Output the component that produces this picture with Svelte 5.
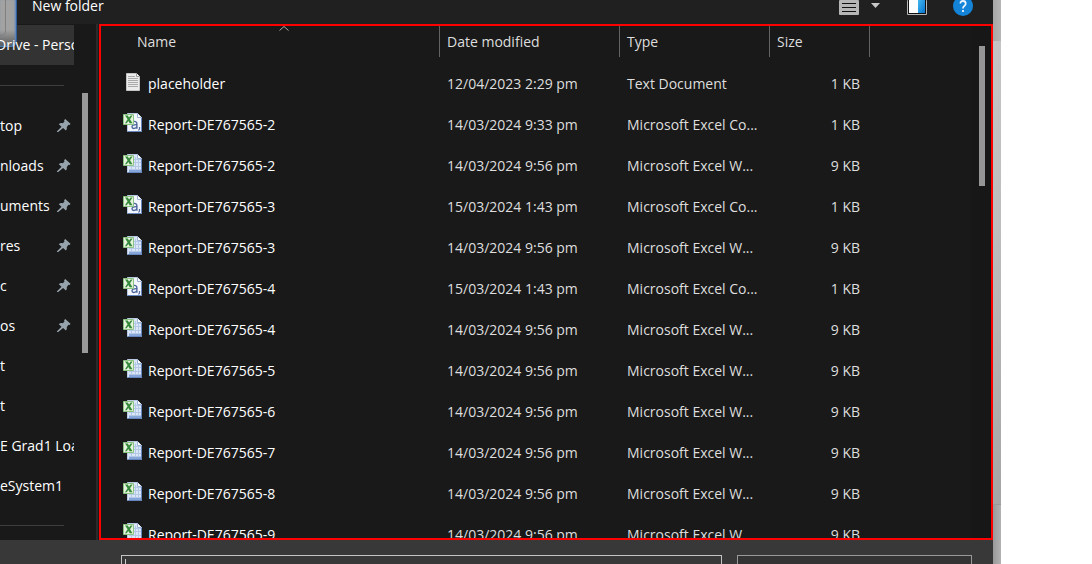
<script>
  const pinned = ['top', 'nloads', 'uments', 'res', 'c', 'os'];
  const folders = ['t', 't', 'E Grad1 Loa', 'eSystem1'];
  const csv = 'Microsoft Excel Co...';
  const xls = 'Microsoft Excel W...';
  const files = [
    { icon: 'txt', name: 'placeholder', date: '12/04/2023 2:29 pm', type: 'Text Document', size: '1 KB' },
    { icon: 'csv', name: 'Report-DE767565-2', date: '14/03/2024 9:33 pm', type: csv, size: '1 KB' },
    { icon: 'xls', name: 'Report-DE767565-2', date: '14/03/2024 9:56 pm', type: xls, size: '9 KB' },
    { icon: 'csv', name: 'Report-DE767565-3', date: '15/03/2024 1:43 pm', type: csv, size: '1 KB' },
    { icon: 'xls', name: 'Report-DE767565-3', date: '14/03/2024 9:56 pm', type: xls, size: '9 KB' },
    { icon: 'csv', name: 'Report-DE767565-4', date: '15/03/2024 1:43 pm', type: csv, size: '1 KB' },
    ...[4, 5, 6, 7, 8, 9].map((n) => ({
      icon: 'xls', name: `Report-DE767565-${n}`, date: '14/03/2024 9:56 pm', type: xls, size: '9 KB'
    }))
  ];
</script>

{#snippet fileIcon(kind)}
  <svg class="file-icon" width="20" height="20" viewBox="0 0 20 20" aria-hidden="true">
    {#if kind === 'txt'}
      <path d="M3.500 1.500h10l3 3v14h-13z" fill="#ececec" stroke="#c4c4c4" />
      <path d="M13.500 1.500v3h3" fill="#fff" stroke="#999" />
      <path d="M5 4.500h7M5 6.500h10M5 8.500h10M5 10.500h10M5 12.500h10M5 14.500h10" stroke="#a9a9a9" />
    {:else}
      <path d="M4.500 .5h10l4 4v14h-14z" fill={kind === 'csv' ? '#f3f7fd' : '#dbe6f6'} stroke="#b9c9e3" />
      <path d="M18.500 5v13.500h-14" fill="none" stroke="#6585be" />
      <path d="M14.500 .5v4h4" fill="#fff" stroke="#9db3d6" />
      {#if kind === 'csv'}
        <path d="M9.500 9.200q1.500-1.200 3-.6 1.400.5 1.400 2.400v4.800M13.900 11.600q-4.900-.2-4.900 2.200 0 1.700 1.700 1.700 2.200 0 3.200-2" fill="none" stroke="#4c659d" stroke-width="1.400" />
        <path d="M16.500 14v2l-1 1.500" fill="none" stroke="#4c659d" stroke-width="1.200" />
      {:else}
        <path d="M11 5.500h7M11 8.500h7M6 12.500h12M6 15.500h12M12.500 3v14M15.500 5v12M8.500 12v5" stroke="#b4c8e8" />
        <path d="M6 16h12v2H6z" fill="#86a5d8" />
      {/if}
      <path d="M.5 1.500h10v10H.5z" fill="#e3f3dc" stroke="#8cc383" />
      <path d="M2 2.500h2.800l1.200 2L7.800 2.500h1.700L7 6.300l2.500 4H6.700L5.300 8 3.700 10.300H2l2.600-4z" fill="#35893a" />
    {/if}
  </svg>
{/snippet}

<div class="screen">
  <div class="dialog">
    <header class="toolbar">
      <button class="new-folder">New folder</button>
      <div class="tools">
        <button class="view" aria-label="Change your view">
          <svg width="20" height="20" viewBox="0 0 20 20"><rect width="20" height="15" y="0" rx="1" fill="#b6b6b6" /><path d="M3 3.500h14M3 7.500h14M3 11.500h14" stroke="#111" /></svg>
        </button>
        <button class="more" aria-label="More options">
          <svg width="10" height="6" viewBox="0 0 10 6"><path d="M0 0h9L4.500 5z" fill="#c8c8c8" /></svg>
        </button>
        <button class="preview" aria-label="Show the preview pane">
          <svg width="20" height="20" viewBox="0 0 20 20">
            <defs><linearGradient id="pane" x2="1" y2="1"><stop stop-color="#43b9ef" /><stop offset="1" stop-color="#0874cf" /></linearGradient></defs>
            <rect width="20" height="15" rx="1" fill="#b6b6b6" /><path d="M1 0h18v14H1z" fill="#111" /><path d="M2 0h9v13H2z" fill="#fff" /><path d="M11 0h7v13h-7z" fill="url(#pane)" />
          </svg>
        </button>
        <button class="help" aria-label="Get help">
          <svg width="20" height="20" viewBox="0 0 20 20"><circle cx="10" cy="10" r="10" fill="#1484d8" /><path d="M7.500 7.500Q7.300 5 10 5t2.700 2.500Q12.700 9 11.300 10T10 12.500M10 14v2" fill="none" stroke="#e8f4ff" stroke-width="1.800" /></svg>
        </button>
      </div>
    </header>

    <div class="body">
      <nav class="sidebar" aria-label="Folders">
        <div class="tree">
          <a class="place current" href="#drive"><span>Drive - Perso</span></a>
          <hr />
          {#each pinned as name}
            <a class="place" href="#folder">
              <span>{name}</span>
              <svg class="pin" width="14" height="14" viewBox="0 0 14 14" aria-hidden="true"><path d="M8.200 0L13.500 4.700 12.700 6l-1.200-.2-1.700 2.100q.5 2.200-.9 3.700L6.100 9 1.200 13H0v-.8l4.500-4.500L1.800 5.200q1.700-1.600 4-.9l1.700-1.800-.4-1.200z" fill="#98a4ad" /></svg>
            </a>
          {/each}
          {#each folders as name}
            <a class="place" href="#folder"><span>{name}</span></a>
          {/each}
          <hr />
        </div>
        <div class="track"><div class="side-thumb"></div></div>
      </nav>

      <main class="files">
        <table>
          <colgroup><col class="c-name" /><col class="c-date" /><col class="c-type" /><col class="c-size" /><col /></colgroup>
          <thead>
            <tr>
              <th aria-sort="ascending">
                <button>Name</button>
                <svg class="sort" width="10" height="6" viewBox="0 0 10 6" aria-hidden="true"><path d="M.5 4.500L5 .5l4.500 4" fill="none" stroke="#aaa" /></svg>
              </th>
              <th><button>Date modified</button></th>
              <th><button>Type</button></th>
              <th><button>Size</button></th>
              <td></td>
            </tr>
          </thead>
          <tbody>
            {#each files as file}
              <tr>
                <td><div class="name">{@render fileIcon(file.icon)}<span>{file.name}</span></div></td>
                <td>{file.date}</td>
                <td>{file.type}</td>
                <td class="size">{file.size}</td>
                <td></td>
              </tr>
            {/each}
          </tbody>
        </table>
        <div class="main-track"><div class="main-thumb"></div></div>
      </main>
    </div>

    <footer>
      <input class="filename" type="text" aria-label="File name" />
      <select aria-label="File type"><option></option></select>
    </footer>
    <div class="ghost"></div>
  </div>
  <div class="edge"><div class="edge-top"></div><div class="edge-mid"></div><div class="edge-end"></div></div>
</div>

<style>
  :global(body) { margin: 0; background: #fff; }
  * { box-sizing: border-box; }
  .screen {
    display: flex;
    height: 100vh;
    padding-right: 91px;
    overflow: hidden;
    font: 14px/20px "Open Sans", "Noto Sans", sans-serif;
    color: #fff;
  }
  button {
    padding: 0;
    border: 0;
    background: none;
    color: inherit;
    font: inherit;
  }
  svg { display: block; flex: none; }
  .dialog {
    position: relative;
    flex: 1;
    min-width: 0;
    display: flex;
    flex-direction: column;
    background: #191919;
  }
  .toolbar {
    display: flex;
    justify-content: space-between;
    align-items: flex-end;
    height: 24px;
    flex: none;
    padding: 0 20px 8px 32px;
    background: #202020;
  }
  .tools { display: flex; align-items: center; height: 20px; }
  .new-folder { height: 20px; }
  .view { margin-right: 12px; }
  .more { margin-right: 26px; }
  .preview { margin-right: 26px; }
  .view, .preview { padding-top: 8px; }
  .body { flex: 1; display: flex; min-height: 0; }
  .sidebar {
    display: flex;
    width: 99px;
    flex: none;
    overflow: hidden;
    background: linear-gradient(to right, transparent 96px, #2b2b2b 96px, #2b2b2b 98px, transparent 98px);
  }
  .tree { width: 74px; flex: none; padding-top: 1px; overflow: hidden; }
  .place {
    display: flex;
    align-items: center;
    justify-content: space-between;
    height: 40px;
    color: #fff;
    white-space: nowrap;
    text-decoration: none;
  }
  .current { background: #333; text-indent: -4px; }
  .current span { position: relative; z-index: 1; }
  .pin { margin-right: 3px; }
  hr { height: 1px; margin: 20px 10px 20px 0; border: 0; background: #3d3d3d; }
  hr:last-child { margin-top: 19px; }
  .track { padding: 69px 0 0 8px; }
  .side-thumb { width: 6px; height: 260px; background: #999; }
  .files {
    flex: 1;
    min-width: 0;
    display: flex;
    overflow: hidden;
    border: 2px solid #f00;
  }
  table {
    flex: 1;
    width: 0;
    align-self: flex-start;
    table-layout: fixed;
    border-collapse: collapse;
  }
  .c-name { width: 339px; }
  .c-date { width: 180px; }
  .c-type { width: 150px; }
  .c-size { width: 100px; }
  th {
    position: relative;
    height: 37px;
    padding: 0 0 6px 7px;
    text-align: left;
    font-weight: 400;
    color: #dedede;
    background: linear-gradient(#636363, #636363) right top / 1px 31px no-repeat;
  }
  th:first-child { padding-left: 36px; }
  .sort { position: absolute; left: 178px; top: 0; }
  tbody td {
    height: 41px;
    padding: 0 0 0 7px;
    color: #dedede;
    white-space: nowrap;
  }
  tbody td:first-child { padding-left: 22px; color: #fff; }
  .name { display: flex; align-items: center; gap: 5px; }
  .file-icon { margin-bottom: 3px; }
  tbody .size { padding-right: 10px; text-align: right; }
  .main-track { width: 20px; flex: none; padding: 20px 0 0 8px; background: #171717; }
  .main-thumb { width: 6px; height: 140px; background: #959595; }
  footer {
    display: flex;
    gap: 15px;
    height: 24px;
    flex: none;
    padding: 15px 21px 0 121px;
    overflow: hidden;
    background: #383838;
  }
  .filename, select {
    height: 28px;
    min-width: 0;
    margin: 0;
    padding: 0 8px;
    border: 1px solid #c4c4c4;
    border-radius: 0;
    background: #383838;
    color: #fff;
    font: inherit;
    appearance: none;
  }
  .filename {
    flex: 1;
    background: linear-gradient(#ccc, #ccc) 3px 3px / 1px 20px no-repeat #383838;
  }
  select { width: 235px; flex: none; border-color: #999; background: #333; }
  .ghost {
    position: absolute;
    left: 0;
    top: 0;
    width: 17px;
    height: 47px;
    border-right: 1px solid #2f5f9e;
    border-radius: 0 0 6px 0;
    background: linear-gradient(#a2a2a2 30px, #6c6c6c99);
    box-shadow: inset -1px -1px 2px #5283c3;
  }
  .ghost::after {
    content: "";
    position: absolute;
    left: -8px;
    top: -6px;
    width: 12px;
    height: 40px;
    border: 1px solid #808080;
    border-radius: 5px;
  }
  .edge { display: flex; flex-direction: column; width: 8px; flex: none; }
  .edge-top { height: 41px; background: linear-gradient(to right, #a6a6a6, #b5b5b5); }
  .edge-mid { flex: 1; border-bottom: 1px solid #999; background: linear-gradient(#c4c4c4, #bdbdbd 40%, #a5a5a5); }
  .edge-end { height: 59px; background: linear-gradient(to right, #999, #b2b2b2); }
</style>
